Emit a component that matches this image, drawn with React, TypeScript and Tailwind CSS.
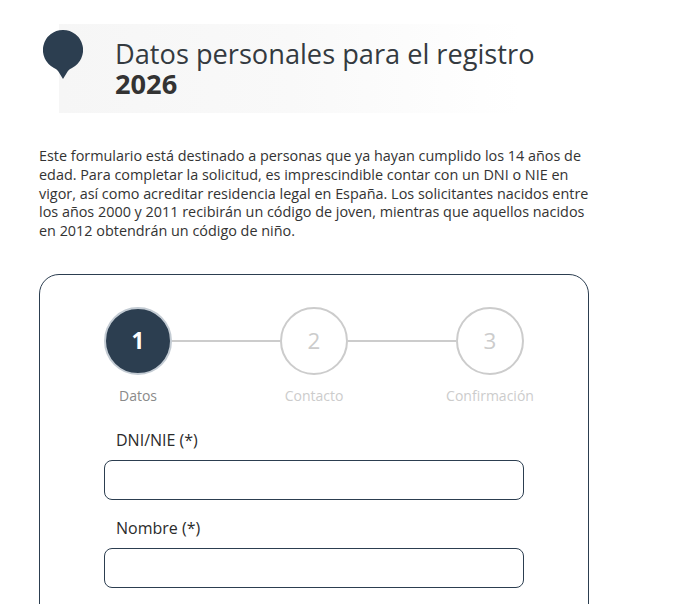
const steps = [
  { n: "1", label: "Datos", active: true },
  { n: "2", label: "Contacto", active: false },
  { n: "3", label: "Confirmación", active: false },
];

function Field({ label }: { label: string }) {
  return (
    <div className="flex flex-col">
      <label className="pl-3 text-base leading-[22px] text-[#2b2b2b]">{label}</label>
      <input type="text" className="mt-[9px] h-10 w-full rounded-lg border border-[#2c3e50] bg-white" />
    </div>
  );
}

export default function App() {
  return (
    <div className="h-[604px] w-[680px] overflow-hidden bg-white font-['Open_Sans',sans-serif]">
      <div className="ml-[39px] w-[550px] pt-6">
        <div className="relative ml-5 h-[89px] w-[462px] bg-gradient-to-r from-[#f6f6f6] via-[#f9f9f9] to-white pl-[56px] pt-[15px]">
          <svg className="absolute left-[-16px] top-[6px]" width="40" height="49" viewBox="0 0 40 49">
            <path d="M20 0a20 20 0 0 1 9 37.900c-2 1-3.400 1.900-4.400 3.500L20 49l-4.600-7.600c-1-1.600-2.400-2.500-4.400-3.500A20 20 0 0 1 20 0z" fill="#2c3e50" />
          </svg>
          <h1 className="whitespace-nowrap text-[27.2px] leading-[30px] text-[#343a40]">Datos personales para el registro</h1>
          <p className="text-[27.2px] font-bold leading-[30px] text-[#333333]">2026</p>
        </div>
        <p className="mt-[34px] text-[14.4px] leading-[18.75px] text-[#333333]">
          Este formulario está destinado a personas que ya hayan cumplido los 14 años de edad. Para completar la solicitud, es imprescindible contar con un DNI o NIE en vigor, así como acreditar residencia legal en España. Los solicitantes nacidos entre los años 2000 y 2011 recibirán un código de joven, mientras que aquellos nacidos en 2012 obtendrán un código de niño.
        </p>
        <div className="mt-[33px] h-[400px] rounded-[20px] border border-[#2c3e50] px-16 pt-8">
          <div className="flex justify-between">
            {steps.map((s, i) => (
              <div key={s.n} className="relative flex w-[68px] flex-col items-center">
                {i > 0 && <div className="absolute right-[68px] top-[33px] h-0.5 w-[108px] bg-[#cccccc]" />}
                <div
                  className={
                    s.active
                      ? "flex h-[68px] w-[68px] items-center justify-center rounded-full border-2 border-[#c3cbd3] bg-[#2c3e50] text-[22.4px] font-bold text-white"
                      : "flex h-[68px] w-[68px] items-center justify-center rounded-full border-2 border-[#cccccc] bg-white text-[22.4px] text-[#cccccc]"
                  }
                >
                  {s.n}
                </div>
                <span className={s.active ? "mt-[11px] whitespace-nowrap text-sm leading-5 text-[#8a8a8a]" : "mt-[11px] whitespace-nowrap text-sm leading-5 text-[#cccccc]"}>
                  {s.label}
                </span>
              </div>
            ))}
          </div>
          <div className="mt-[23px] flex flex-col gap-[17px]">
            <Field label="DNI/NIE (*)" />
            <Field label="Nombre (*)" />
          </div>
        </div>
      </div>
    </div>
  );
}
